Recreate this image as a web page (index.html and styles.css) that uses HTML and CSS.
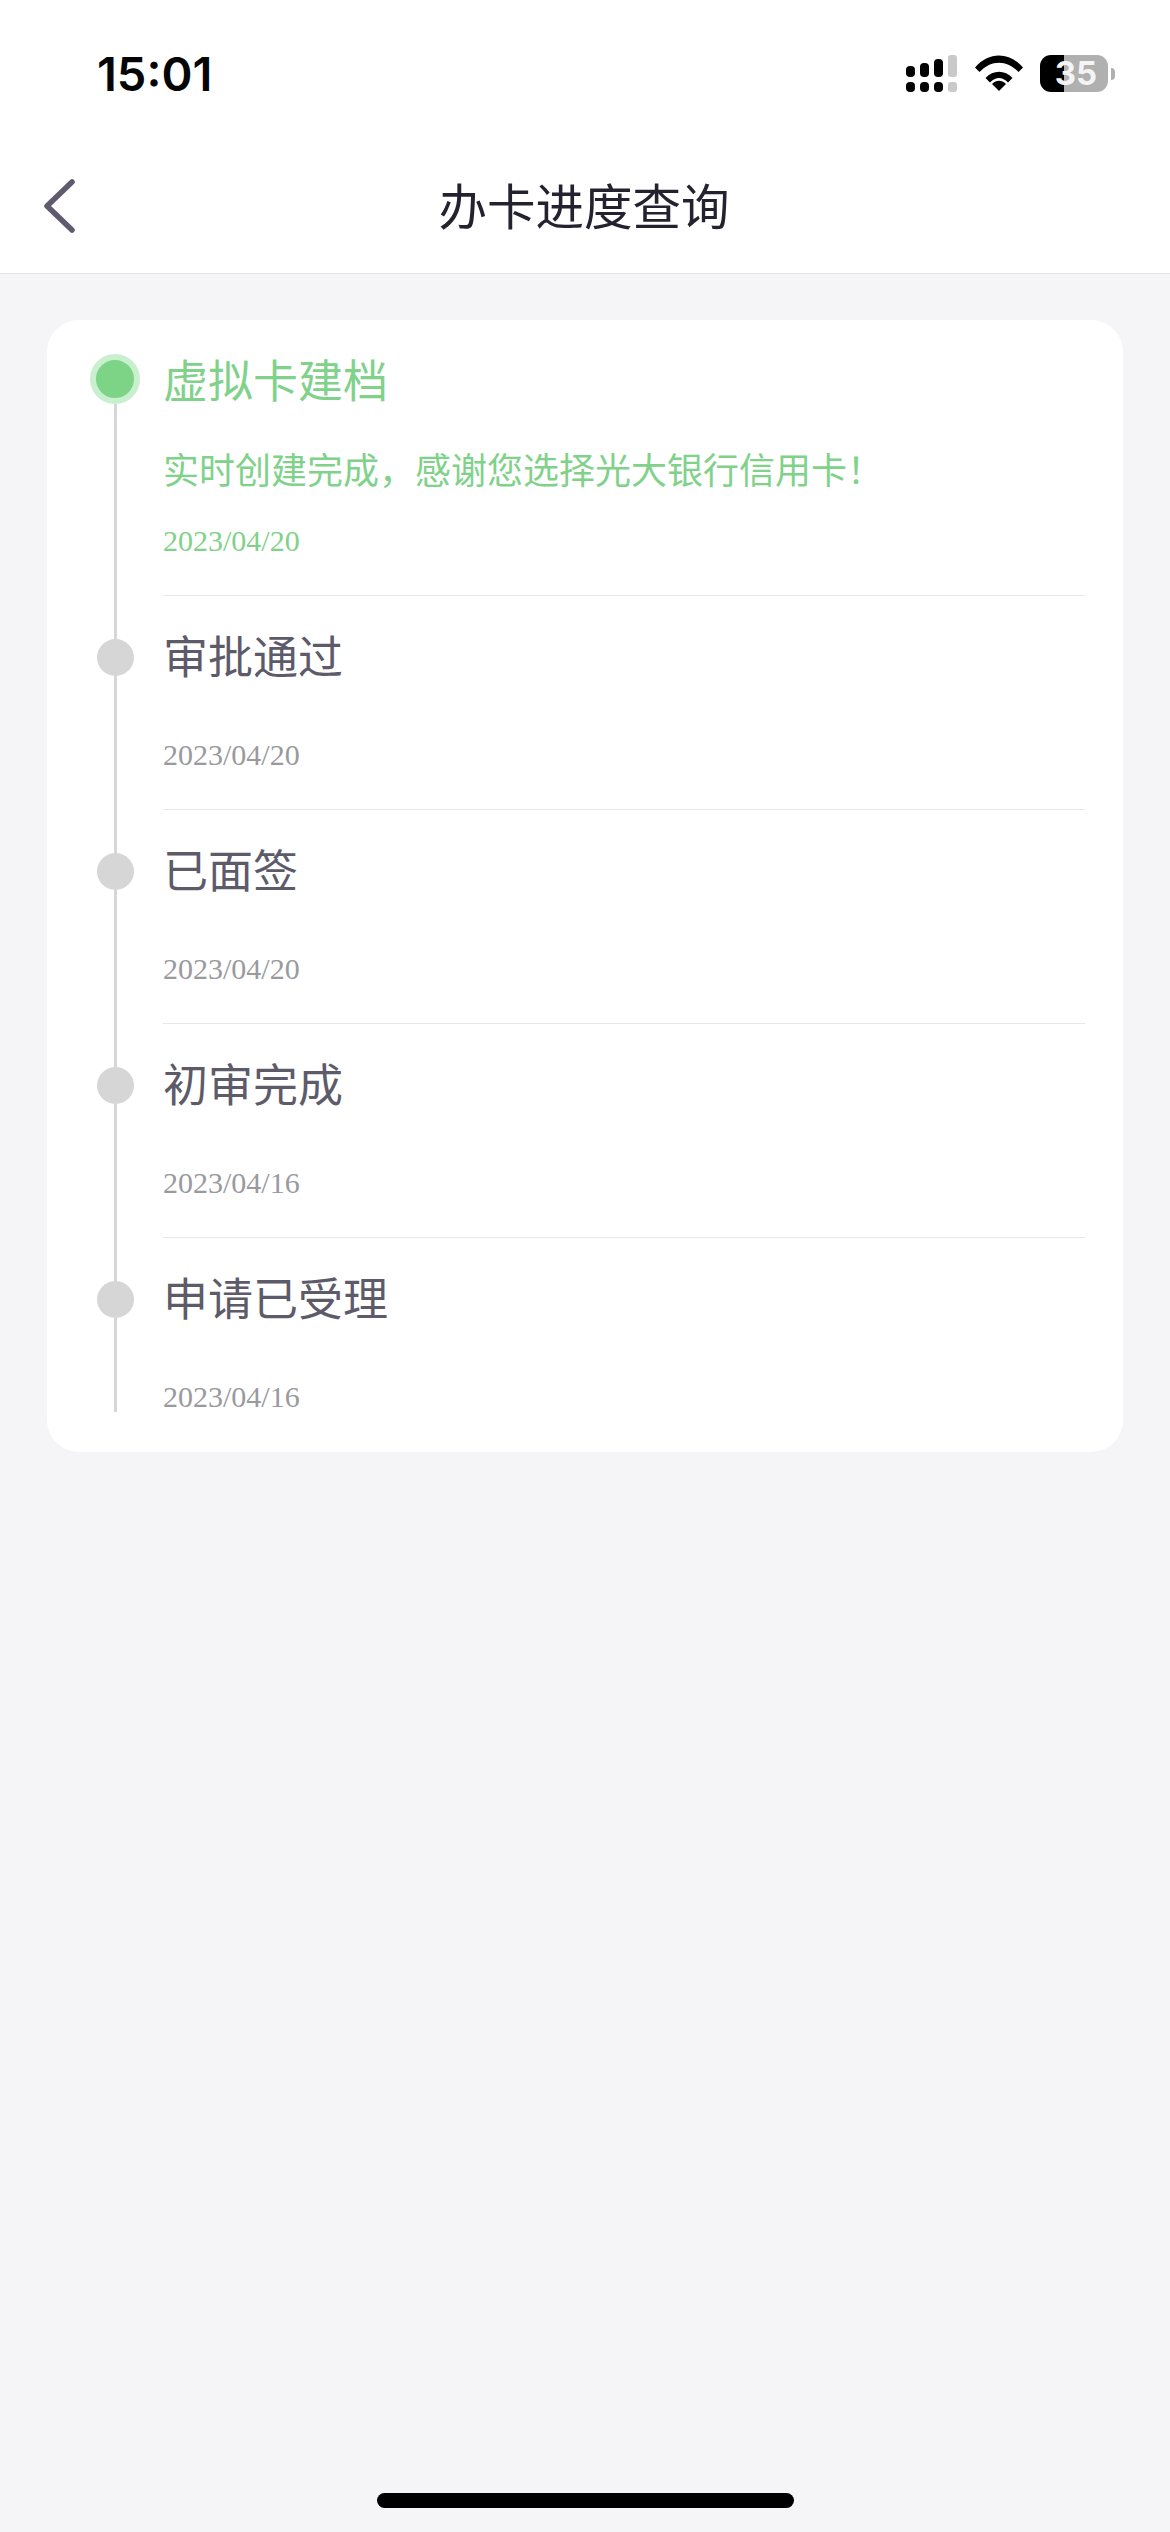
FILE: index.html
```html
<!DOCTYPE html>
<html lang="zh-CN">
<head>
<meta charset="utf-8">
<title>办卡进度查询</title>
<link rel="stylesheet" href="styles.css">
</head>
<body>
<div class="page">
  <header class="top">
    <div class="status">
      <span class="time">15:01</span>
      <div class="status-icons">
        <svg class="signal" width="52" height="38" viewBox="0 0 52 38">
          <rect x="0" y="11" width="9" height="11" rx="4" />
          <rect x="14" y="8" width="9" height="14" rx="4" />
          <rect x="28" y="4" width="9" height="18" rx="4" />
          <rect class="off" x="42" y="0" width="9" height="22" rx="3" />
          <rect x="0" y="27" width="9" height="10" rx="4" />
          <rect x="14" y="27" width="9" height="10" rx="4" />
          <rect x="28" y="27" width="9" height="10" rx="4" />
          <rect class="off" x="42" y="27" width="9" height="10" rx="3" />
        </svg>
        <svg class="wifi" width="48" height="36" viewBox="0 0 48 36">
          <path d="M0 12.5 C13.500 -3.500 34.500 -3.500 48 12.500 L43.500 17 C32 4.500 16 4.500 4.500 17 Z" />
          <path d="M10.500 23 C18 14.500 30 14.500 37.500 23 L33 27.500 C27.500 21.500 20.500 21.500 15 27.500 Z" />
          <path d="M17 29 C21.500 24.800 26.500 24.800 31 29 L24 36 Z" />
        </svg>
        <div class="battery"><span>35</span></div>
        <span class="battery-nub"></span>
      </div>
    </div>
    <nav class="navbar">
      <svg class="back" width="34" height="56" viewBox="0 0 34 56">
        <path d="M29 4 L4 28 L29 52" />
      </svg>
      <h1 class="nav-title">办卡进度查询</h1>
    </nav>
  </header>

  <main class="card">
    <section class="item item-active item-first">
      <div class="rail">
        <span class="dot"></span>
        <span class="line line-grow"></span>
      </div>
      <div class="body">
        <h2 class="step">虚拟卡建档</h2>
        <p class="desc">实时创建完成，感谢您选择光大银行信用卡！</p>
        <time class="date date-near">2023/04/20</time>
      </div>
    </section>
    <section class="item">
      <div class="rail">
        <span class="line line-top"></span>
        <span class="dot"></span>
        <span class="line line-grow"></span>
      </div>
      <div class="body">
        <h2 class="step">审批通过</h2>
        <time class="date">2023/04/20</time>
      </div>
    </section>
    <section class="item">
      <div class="rail">
        <span class="line line-top"></span>
        <span class="dot"></span>
        <span class="line line-grow"></span>
      </div>
      <div class="body">
        <h2 class="step">已面签</h2>
        <time class="date">2023/04/20</time>
      </div>
    </section>
    <section class="item">
      <div class="rail">
        <span class="line line-top"></span>
        <span class="dot"></span>
        <span class="line line-grow"></span>
      </div>
      <div class="body">
        <h2 class="step">初审完成</h2>
        <time class="date">2023/04/16</time>
      </div>
    </section>
    <section class="item item-last">
      <div class="rail">
        <span class="line line-top"></span>
        <span class="dot"></span>
        <span class="line line-grow"></span>
      </div>
      <div class="body">
        <h2 class="step">申请已受理</h2>
        <time class="date">2023/04/16</time>
      </div>
    </section>
  </main>

  <div class="home-bar"></div>
</div>
</body>
</html>
```

FILE: styles.css
```css
* {
  box-sizing: border-box;
}

html,
body {
  margin: 0;
  padding: 0;
}

body {
  background: #f5f5f7;
  font-family: "Noto Sans CJK SC", "Noto Sans", sans-serif;
}

.page {
  width: 1170px;
  height: 2532px;
  display: flex;
  flex-direction: column;
  overflow: hidden;
}

.top {
  background: #ffffff;
  border-bottom: 1px solid #e3e3e6;
}

.status {
  height: 134px;
  padding: 0 55px 0 97px;
  display: flex;
  justify-content: space-between;
  align-items: flex-start;
}

.time {
  margin-top: 42px;
  font-family: Inter, "Liberation Sans", sans-serif;
  font-size: 47px;
  font-weight: 600;
  line-height: 64px;
  color: #050505;
}

.status-icons {
  margin-top: 55px;
  display: flex;
  align-items: flex-start;
}

.signal {
  fill: #000000;
}

.signal .off {
  fill: #c9c9c9;
}

.wifi {
  margin-left: 17px;
  fill: #000000;
}

.battery {
  margin-left: 17px;
  width: 68px;
  height: 37px;
  border-radius: 11px;
  background: linear-gradient(90deg, #000000 0 24px, #b0b0b0 24px 100%);
  display: flex;
  align-items: center;
  justify-content: center;
  font-family: Inter, "Liberation Sans", sans-serif;
  font-size: 33px;
  font-weight: 700;
  color: #f4f4f4;
  line-height: 37px;
}

.battery span {
  margin-left: 4px;
}

.battery-nub {
  margin: 13px 0 0 3px;
  width: 4px;
  height: 12px;
  border-radius: 0 6px 6px 0;
  background: #b0b0b0;
}

.navbar {
  height: 139px;
  padding-left: 43px;
  display: grid;
  grid-template-columns: 34px 1fr 34px;
  align-items: center;
}

.back {
  margin-top: 5px;
  fill: none;
  stroke: #5f5a6d;
  stroke-width: 5.500;
  stroke-linecap: round;
  stroke-linejoin: round;
}

.nav-title {
  margin: 0 45px 0 0;
  text-align: center;
  font-size: 48.500px;
  font-weight: 400;
  line-height: 66px;
  color: #24222f;
}

.card {
  margin: 46px 47px 0;
  padding: 29px 38px 35px 43px;
  background: #ffffff;
  border-radius: 32px;
}

.item {
  display: grid;
  grid-template-columns: 50px 1fr;
  column-gap: 23px;
}

.rail {
  display: flex;
  flex-direction: column;
  align-items: center;
}

.item-first .rail {
  padding-top: 5px;
}

.item-last .rail {
  padding-bottom: 5px;
}

.line {
  display: block;
  width: 3px;
  background: #d6d6d6;
}

.line-top {
  height: 43px;
}

.line-grow {
  flex: 1;
}

.dot {
  display: block;
  flex: none;
  width: 37px;
  height: 37px;
  border-radius: 50%;
  background: #d6d6d6;
}

.item-active .dot {
  width: 50px;
  height: 50px;
  background: #7dd487;
  border: 6px solid #c9f0ce;
}

.body {
  padding: 29px 0 34px;
  border-bottom: 1px solid #e8e8ea;
}

.item-first .body {
  padding-top: 0;
}

.item-last .body {
  padding-bottom: 0;
  border-bottom: 0;
}

.step {
  margin: 0;
  font-size: 45px;
  font-weight: 400;
  line-height: 60px;
  color: #5d5b6a;
}

.item-active .step,
.item-active .desc,
.item-active .date {
  color: #80d28b;
}

.desc {
  margin: 34px 0 0;
  font-size: 36px;
  line-height: 50px;
  white-space: nowrap;
}

.date {
  display: block;
  margin-top: 50px;
  font-family: "Liberation Serif", serif;
  font-size: 30px;
  line-height: 40px;
  color: #9a9a9e;
}

.date-near {
  margin-top: 28px;
}

.home-bar {
  flex: none;
  margin: auto 0 24px 377px;
  width: 417px;
  height: 15px;
  border-radius: 8px;
  background: #000000;
}
```
